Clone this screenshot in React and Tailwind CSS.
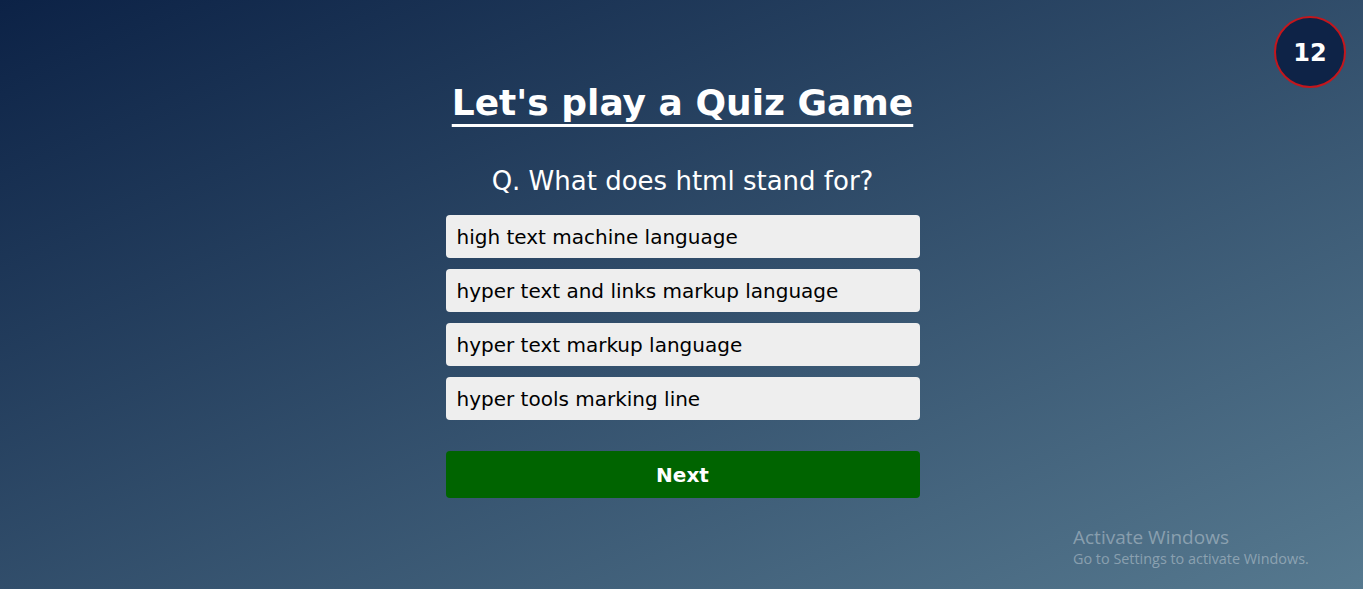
import React from "react";

export default function App() {
  const options = [
    "high text machine language",
    "hyper text and links markup language",
    "hyper text markup language",
    "hyper tools marking line",
  ];
  return (
    <div
      className="relative min-h-screen w-full overflow-hidden bg-[linear-gradient(to_bottom_right,#0c2246,#56798f)]"
      style={{ fontFamily: '"DejaVu Sans", Verdana, sans-serif', height: 589 }}
    >
      <div className="absolute top-[16px] left-[1274px] w-[72px] h-[72px] rounded-full border-2 border-[#c4161c] bg-[#0e2347] flex items-center justify-center pt-[2px] text-white font-bold text-[24px]">
        12
      </div>
      <div className="flex flex-col items-center pt-[81px] pl-[2px]">
        <h1
          className="text-[36px] leading-[44px] font-bold text-white underline decoration-[3px] underline-offset-[9px]"
          style={{ textDecorationSkipInk: "none" }}
        >
          Let's play a Quiz Game
        </h1>
        <h2 className="mt-[40px] text-[26px] leading-[32px] text-white">
          Q. What does html stand for?
        </h2>
        <div className="mt-[18px] w-[474px] flex flex-col gap-[11px]">
          {options.map((o) => (
            <div
              key={o}
              className="h-[43px] rounded-[4px] bg-[#eeeeee] flex items-center pl-[11px] pt-[1px] text-[20px] text-black"
            >
              {o}
            </div>
          ))}
          <button className="mt-[20px] h-[47px] rounded-[4px] bg-[#006400] text-white font-bold text-[20px]">
            Next
          </button>
        </div>
      </div>
      <div
        className="absolute left-[1073px] top-[525px] text-[rgba(255,255,255,0.35)]"
        style={{ fontFamily: '"Open Sans", "Noto Sans", sans-serif' }}
      >
        <div className="text-[19px] leading-[24px]">Activate Windows</div>
        <div className="text-[14.4px] leading-[20px]">Go to Settings to activate Windows.</div>
      </div>
    </div>
  );
}
